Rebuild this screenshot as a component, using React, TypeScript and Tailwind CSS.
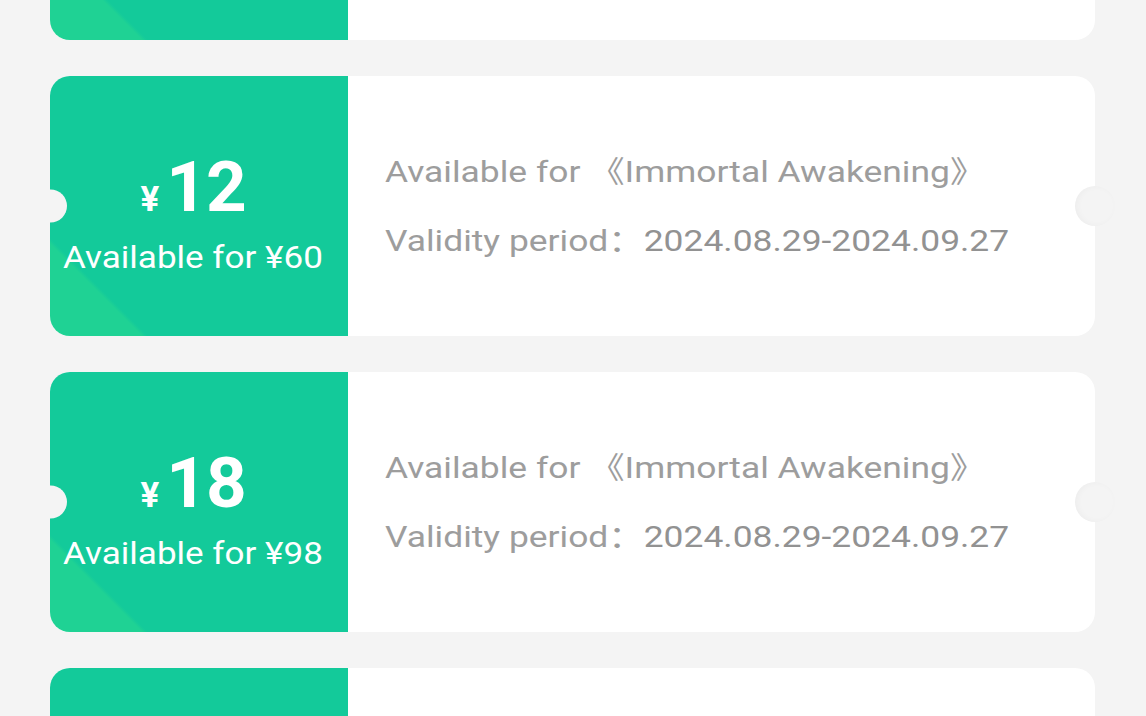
import React from 'react'

interface Coupon {
    amount: number
    minSpend: number
}

const coupons: Coupon[] = [
    { amount: 6, minSpend: 30 },
    { amount: 12, minSpend: 60 },
    { amount: 18, minSpend: 98 },
    { amount: 30, minSpend: 198 },
]

function CouponCard({ coupon, first }: { coupon: Coupon; first?: boolean }) {
    return (
        <div
            className={`relative flex h-[260px] shrink-0 rounded-[20px] bg-white ${first ? '-mt-[220px]' : ''}`}
        >
            {/* Value side */}
            <div className="flex w-[298px] shrink-0 flex-col items-center justify-center rounded-l-[20px] bg-[#13ca9a] bg-[linear-gradient(45deg,#1fd294_0%,#1fd294_16.5%,rgba(31,210,148,0)_17.5%)] pt-[12px] pr-[12px] text-white">
                <div className="flex items-baseline leading-none">
                    <span className="mr-[7px] text-[35px] font-bold">¥</span>
                    <span className="text-[71px] font-bold tracking-[-1px]">{coupon.amount}</span>
                </div>
                <div className="mt-[20px] origin-center scale-x-[1.13] whitespace-nowrap text-[31px] leading-none">
                    Available for ¥{coupon.minSpend}
                </div>
            </div>

            {/* Details */}
            <div className="flex flex-1 flex-col justify-center gap-[39px] pl-[37px] text-[30px] leading-none text-[#9d9d9d]">
                <p className="origin-left scale-x-[1.18] whitespace-nowrap">Available for 《Immortal Awakening》</p>
                <p className="origin-left scale-x-[1.18] whitespace-nowrap">
                    Validity period：<span className="text-[#929292]">2024.08.29-2024.09.27</span>
                </p>
            </div>

            {/* Notches */}
            <div className="absolute left-[-16px] top-1/2 h-[33px] w-[33px] -translate-y-1/2 rounded-full bg-[#f4f4f4]" />
            <div className="absolute right-[-20px] top-1/2 h-[40px] w-[40px] -translate-y-1/2 rounded-full bg-[#f4f4f4] shadow-[inset_2px_0_6px_rgba(0,0,0,0.03)]" />
        </div>
    )
}

export default function App() {
    return (
        <div
            className="h-[716px] w-[1146px] overflow-hidden bg-[#f4f4f4]"
            style={{ fontFamily: 'Roboto, "Noto Sans", "Noto Sans CJK SC", sans-serif' }}
        >
            <div className="flex flex-col gap-[36px] pl-[50px] pr-[51px]">
                {coupons.map((c, i) => (
                    <CouponCard key={c.amount} coupon={c} first={i === 0} />
                ))}
            </div>
        </div>
    )
}
